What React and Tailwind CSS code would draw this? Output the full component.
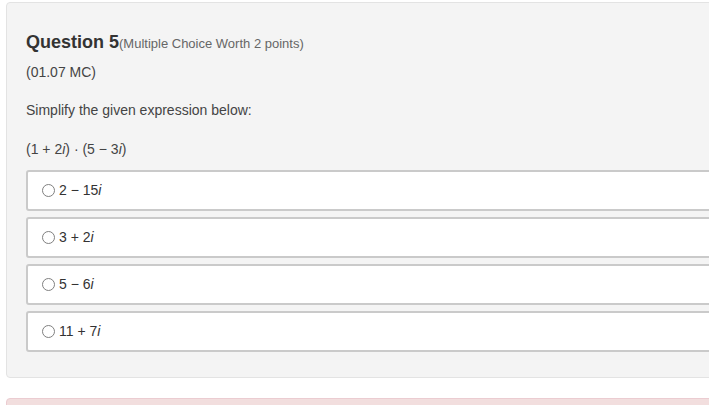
import React from "react";

const options = [
  ["2 − 15", "i"],
  ["3 + 2", "i"],
  ["5 − 6", "i"],
  ["11 + 7", "i"],
];

const Radio = () => (
  <span className="inline-block w-[13px] h-[13px] rounded-full border border-[#808080] bg-white mr-[4px] shrink-0" />
);

const App = () => {
  return (
    <div
      className="w-[709px] h-[405px] overflow-hidden bg-white text-[#333]"
      style={{ fontFamily: '"Liberation Sans", Arial, sans-serif' }}
    >
      <div className="ml-[6px] mt-[2px] w-[740px] bg-[#f4f4f4] border border-[#e3e3e3] rounded-[4px] pl-[19px] pt-[26px] pb-[25px]">
        <div className="flex items-baseline h-[24px]">
          <span className="text-[18px] font-bold text-[#333]">Question 5</span>
          <span className="text-[13px] text-[#666]">(Multiple Choice Worth 2 points)</span>
        </div>
        <div className="mt-[10px] text-[14px] text-[#444] leading-[18px]">(01.07 MC)</div>
        <div className="mt-[20px] text-[14px] text-[#444] leading-[18px]">Simplify the given expression below:</div>
        <div className="mt-[21px] text-[14px] text-[#444] leading-[18px]">
          (1 + 2<i>i</i>) · (5 − 3<i>i</i>)
        </div>
        <div className="mt-[12px] flex flex-col gap-[6px]">
          {options.map(([a, b]) => (
            <div
              key={a}
              className="h-[41px] bg-white border-2 border-[#cacaca] rounded-[3px] flex items-center pl-[14px] text-[14px] text-[#333]"
            >
              <Radio />
              <span>
                {a}
                <i>{b}</i>
              </span>
            </div>
          ))}
        </div>
      </div>
      <div className="ml-[6px] mt-[20px] w-[740px] h-[20px] bg-[#f2dede] border border-[#ebccd1] rounded-[4px]" />
    </div>
  );
};

export default App;
